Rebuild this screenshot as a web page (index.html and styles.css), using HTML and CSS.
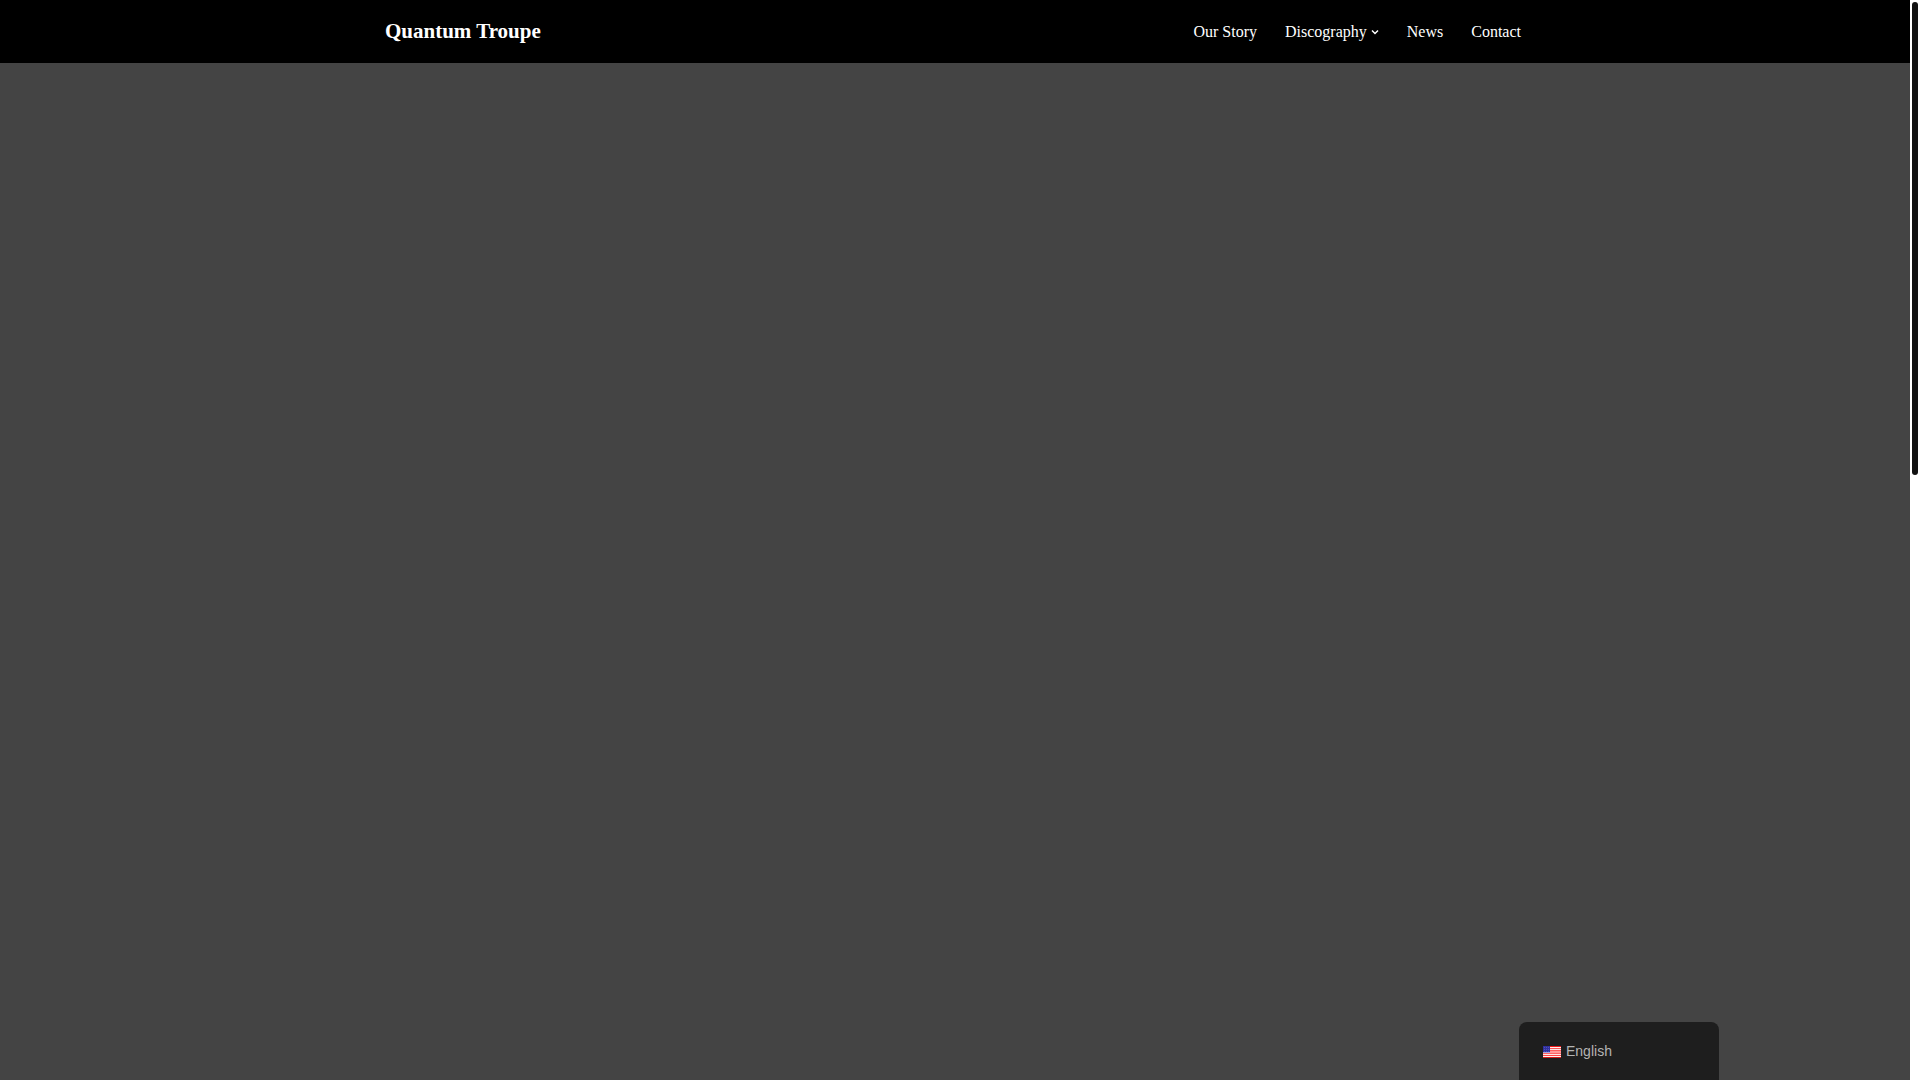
FILE: index.html
```html
<!DOCTYPE html>
<html lang="en">
<head>
    <meta charset="UTF-8">
    <meta name="viewport" content="width=device-width, initial-scale=1.0">
    <title>Quantum Troupe</title>
    <link rel="stylesheet" href="styles.css">
</head>
<body>
    <div class="page">
        <header class="header">
            <div class="container">
                <a class="site-title" href="#">Quantum Troupe</a>
                <nav class="primary-menu" aria-label="Primary Menu">
                    <a href="#">Our Story</a>
                    <a class="has-children" href="#">Discography
                        <svg class="caret" viewBox="0 0 8 8" aria-hidden="true">
                            <path d="M1 2.5 L4 5.5 L7 2.5" fill="none" stroke="currentColor" stroke-width="1.5"/>
                        </svg>
                    </a>
                    <a href="#">News</a>
                    <a href="#">Contact</a>
                </nav>
            </div>
        </header>

        <main class="hero"></main>

        <div class="language-switcher">
            <a href="#">
                <svg class="flag" viewBox="0 0 18 12" aria-hidden="true">
                    <rect width="18" height="12" fill="#ff9a9a"/>
                    <rect width="18" height="1" fill="#f01818"/>
                    <rect y="1" width="18" height="1" fill="#fff0f0"/>
                    <rect y="2" width="18" height="1" fill="#ff5555"/>
                    <rect y="3" width="18" height="1" fill="#ffe4e4"/>
                    <rect y="4" width="18" height="1" fill="#ff5c5c"/>
                    <rect y="7" width="18" height="1" fill="#ff6464"/>
                    <rect y="8" width="18" height="1" fill="#ffe4e4"/>
                    <rect y="9" width="18" height="1" fill="#ff4444"/>
                    <rect y="10" width="18" height="1" fill="#fff0f0"/>
                    <rect y="11" width="18" height="1" fill="#d81818"/>
                    <rect width="7" height="6" fill="#30309c"/>
                    <rect y="6" width="7" height="1" fill="#a3a3e0"/>
                    <path d="M1 1.5H7M1 3.5H7M1 5.5H7" stroke="#5050bc" stroke-dasharray="1 1"/>
                </svg>
                <span>English</span>
            </a>
        </div>
    </div>

    <div class="scroll-track" aria-hidden="true">
        <div class="scroll-thumb"></div>
    </div>
</body>
</html>
```

FILE: styles.css
```css
:root {
    --header-bg: #000000;
    --hero-bg: #444444;
    --panel-bg: #1e1e1e;
    --text-color: #ffffff;
    --panel-text: #b4b4b4;
}

* {
    box-sizing: border-box;
    margin: 0;
    padding: 0;
}

body {
    display: grid;
    grid-template-columns: 1fr 10px;
    height: 100vh;
    font-family: "Liberation Serif", "Times New Roman", serif;
    font-size: 16px;
    color: var(--text-color);
    background-color: #ffffff;
}

a {
    color: inherit;
    text-decoration: none;
}

.page {
    position: relative;
    display: flex;
    flex-direction: column;
}

.header {
    background-color: var(--header-bg);
}

.container {
    display: flex;
    align-items: center;
    justify-content: space-between;
    max-width: 1170px;
    margin: 0 auto;
    padding: 19px 19px 19px 15px;
}

.site-title {
    font-size: 21px;
    font-weight: bold;
    line-height: 25px;
}

.primary-menu {
    display: flex;
    gap: 28px;
    line-height: 25px;
}

.has-children {
    display: flex;
    align-items: center;
    gap: 4px;
}

.caret {
    width: 8px;
    height: 8px;
}

.hero {
    flex: 1;
    background-color: var(--hero-bg);
}

.language-switcher {
    position: absolute;
    right: 10%;
    bottom: 0;
    width: 200px;
    padding: 20px 24px;
    border-radius: 8px 8px 0 0;
    background-color: var(--panel-bg);
    color: var(--panel-text);
    font-family: "Liberation Sans", Arial, sans-serif;
    font-size: 14px;
    line-height: 18px;
}

.language-switcher a {
    display: flex;
    align-items: flex-end;
    gap: 5px;
}

.flag {
    width: 18px;
    height: 12px;
    margin-bottom: 2px;
}

/* scrollbar */
.scroll-track {
    padding: 2px;
    background-color: #ffffff;
}

.scroll-thumb {
    height: 44%;
    border-radius: 3px;
    background-color: #111111;
}

@media (max-width: 640px) {
    .container {
        flex-direction: column;
    }

    .primary-menu {
        flex-wrap: wrap;
        gap: 16px;
    }
}
```
